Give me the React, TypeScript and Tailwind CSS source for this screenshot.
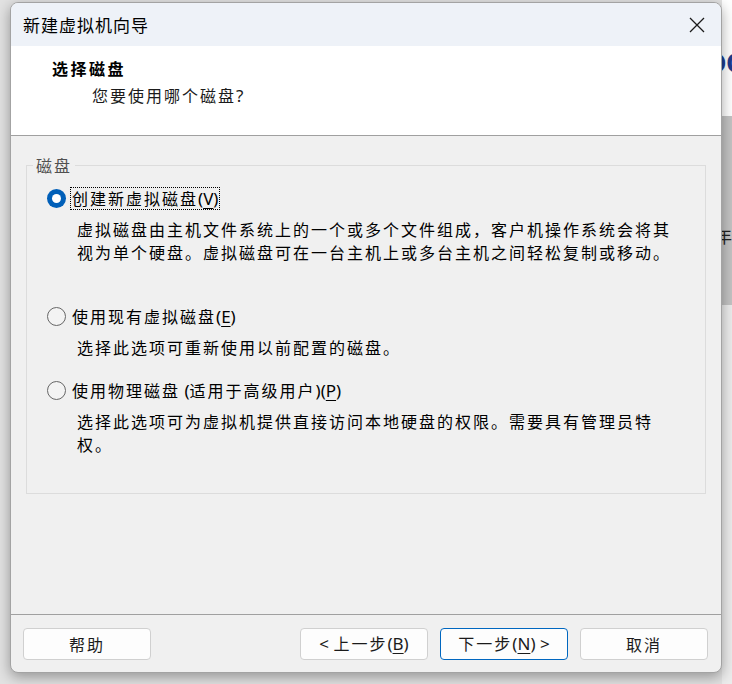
import React from 'react';

const cjk = "font-['Noto_Sans_CJK_SC',sans-serif]";

// latin bits (brackets, mnemonics) are not spaced like the CJK glyphs
const Lat = ({ children }: { children: React.ReactNode }) => (
  <span className="font-['Noto_Sans','Noto_Sans_CJK_SC',sans-serif] text-[17px] tracking-normal">{children}</span>
);

const Key = ({ k }: { k: string }) => (
  <Lat>
    (<span className="underline underline-offset-[3px] decoration-1">{k}</span>)
  </Lat>
);

interface OptionProps {
  label: React.ReactNode;
  lines: string[];
  checked?: boolean;
  className?: string;
}

const Option: React.FC<OptionProps> = ({ label, lines, checked, className }) => (
  <div className={className}>
    <div className="flex items-center h-[23px]">
      {checked ? (
        <span className="w-[19px] h-[19px] shrink-0 rounded-full bg-[#005fb8] flex items-center justify-center">
          <span className="w-[9px] h-[9px] rounded-full bg-white" />
        </span>
      ) : (
        <span className="w-[19px] h-[19px] shrink-0 rounded-full border border-[#666666] bg-[#f3f3f3]" />
      )}
      <span
        className={`ml-[4px] px-[1px] leading-[20px] border ${checked ? 'border-dotted border-black' : 'border-transparent'}`}
      >
        {label}
      </span>
    </div>
    <div className="mt-[8px] ml-[30px] whitespace-nowrap">
      {lines.map((l, i) => (
        <div key={i} className="leading-[23px]">{l}</div>
      ))}
    </div>
  </div>
);

const Btn = ({ children, primary }: { children: React.ReactNode; primary?: boolean }) => (
  <button
    className={`w-[128px] h-[32px] rounded-[4px] bg-[#fdfdfd] border text-[16px] tracking-[2px] text-[#1b1b1b] ${primary ? 'border-[#0067c0]' : 'border-[#d0d0d0]'}`}
  >
    {children}
  </button>
);

export default function App() {
  return (
    <div className={`w-[732px] h-[684px] flex bg-[#e2e2e2] overflow-hidden ${cjk} text-black`}>
      <div className="w-[10px] shrink-0" />

      <div className="w-[712px] shrink-0 pt-[2px]">
        <div className="relative z-10 h-[671px] flex flex-col border border-[#a3a3a3] rounded-[8px] overflow-hidden shadow-[0_4px_14px_rgba(0,0,0,0.35)] bg-[#f0f0f0]">
          {/* title bar */}
          <div className="h-[43px] shrink-0 flex items-center justify-between pl-[12px] pr-[16px] bg-[#eef2f8]">
            <span className="text-[17px] tracking-[1px]">新建虚拟机向导</span>
            <svg width="16" height="16" viewBox="0 0 16 16" className="text-[#1b1b1b]">
              <path d="M1 1 L15 15 M15 1 L1 15" stroke="currentColor" strokeWidth="1.3" fill="none" />
            </svg>
          </div>

          {/* header */}
          <div className="h-[90px] shrink-0 bg-white pl-[41px] pt-[11px] border-b border-[#a0a0a0]">
            <div className="text-[16px] font-bold tracking-[2.5px] leading-[23px]">选择磁盘</div>
            <div className="mt-[4px] ml-[40px] text-[16px] tracking-[2px] leading-[23px] text-[#1b1b1b]">
              您要使用哪个磁盘<Lat>?</Lat>
            </div>
          </div>

          {/* body */}
          <div className="flex-1 pt-[29px] px-[15px] text-[16px] tracking-[2px]">
            <div className="relative border border-[#dcdcdc] pt-[21px] pl-[20px] pb-[37px]">
              <span className="absolute top-[-12px] left-[6px] px-[3px] bg-[#f0f0f0] leading-[23px] text-[#505050]">
                磁盘
              </span>

              <Option
                checked
                label={<>创建新虚拟磁盘<Key k="V" /></>}
                lines={[
                  '虚拟磁盘由主机文件系统上的一个或多个文件组成，客户机操作系统会将其',
                  '视为单个硬盘。虚拟磁盘可在一台主机上或多台主机之间轻松复制或移动。',
                ]}
              />
              <Option
                className="mt-[41px]"
                label={<>使用现有虚拟磁盘<Key k="E" /></>}
                lines={['选择此选项可重新使用以前配置的磁盘。']}
              />
              <Option
                className="mt-[20px]"
                label={<>使用物理磁盘<Lat> (</Lat>适用于高级用户<Lat>)</Lat><Key k="P" /></>}
                lines={['选择此选项可为虚拟机提供直接访问本地硬盘的权限。需要具有管理员特', '权。']}
              />
            </div>
          </div>

          {/* footer */}
          <div className="h-[58px] shrink-0 border-t border-[#a0a0a0] flex pt-[13px] pl-[12px] pr-[13px] items-start">
            <Btn>帮助</Btn>
            <div className="flex-1" />
            <div className="flex gap-[12px]">
              <Btn>
                <Lat>&lt; </Lat>上一步<Key k="B" />
              </Btn>
              <Btn primary>
                下一步<Key k="N" /><Lat> &gt;</Lat>
              </Btn>
              <Btn>取消</Btn>
            </div>
          </div>
        </div>
      </div>

      {/* app window behind, right edge */}
      <div className="w-[10px] shrink-0 flex flex-col overflow-hidden">
        <div className="h-[116px] shrink-0 bg-white pt-[48px] whitespace-nowrap">
          <div className="ml-[-19px] text-[30px] font-bold leading-none text-[#1e3c8e] font-['Liberation_Sans',sans-serif]">OC</div>
        </div>
        <div className="h-[189px] shrink-0 bg-[#c3c3c3] pt-[108px] whitespace-nowrap">
          <div className="ml-[-7px] text-[17px] leading-[23px] text-[#222]">年</div>
        </div>
        <div className="flex-1 bg-[#ececec]" />
      </div>
    </div>
  );
}
